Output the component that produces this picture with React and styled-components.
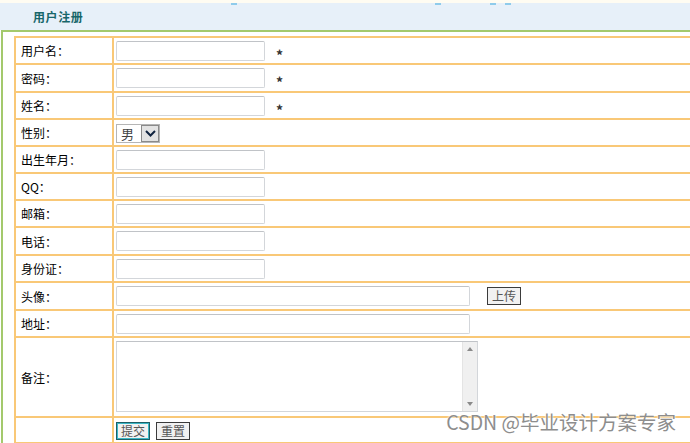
import React from "react";
import styled, { createGlobalStyle } from "styled-components";

const Global = createGlobalStyle`
  html, body { margin: 0; padding: 0; background: #fff; overflow: hidden; }
  body { font-family: "Noto Sans CJK SC", "DejaVu Sans", sans-serif; font-size: 12px; color: #222; }
`;

const Page = styled.div`
  position: relative;
  width: 690px;
  height: 443px;
  overflow: hidden;
`;

const TopStrip = styled.div`
  position: relative;
  height: 3px;
  background: #fffcf2;
`;

const Tick = styled.span`
  position: absolute;
  top: 3px;
  height: 2px;
  width: 6px;
  background: #8fcbeb;
`;

const Header = styled.div`
  height: 27px;
  background: #e7f0f9;
  display: flex;
  align-items: center;
  padding-left: 33px;
`;

const Title = styled.h2`
  margin: 0;
  font-size: 12px;
  font-weight: bold;
  color: #17666a;
  letter-spacing: 0.6px;
`;

const Panel = styled.div`
  margin-left: 1px;
  border-top: 2px solid #a3c96c;
  border-left: 2px solid #a3c96c;
  padding: 4px 0 0 11px;
  height: 420px;
`;

const Table = styled.table`
  width: 780px;
  border-collapse: collapse;
  border: 2px solid #fcdca6;
  table-layout: fixed;
`;

const Row = styled.tr`
  height: ${(p) => p.$h || 27}px;
`;

const Label = styled.td`
  width: 91px;
  padding: 0 0 0 5px;
  border: 2px solid #f9c877;
  font-size: 12px;
  font-weight: 400;
  color: #000;
  vertical-align: middle;
`;

const Cell = styled.td`
  padding: 0 0 0 2px;
  border: 2px solid #f9c877;
  vertical-align: middle;
`;

const Input = styled.input`
  box-sizing: border-box;
  width: ${(p) => p.$w || 149}px;
  height: 20px;
  margin: 0;
  border: 1px solid #d3d6da;
  border-top-color: #c0c3c7;
  border-radius: 2px;
  background: #fff;
  vertical-align: middle;
  font-size: 12px;
`;

const Star = styled.span`
  display: inline-block;
  margin-left: 11px;
  font-size: 14px;
  font-weight: bold;
  color: #333;
  vertical-align: middle;
  position: relative;
  top: 4px;
`;

const SelectBox = styled.span`
  display: inline-flex;
  align-items: stretch;
  height: 19px;
  box-sizing: border-box;
  border: 1px solid #b5b5b5;
  vertical-align: middle;
  background: #fff;
`;

const SelectText = styled.span`
  width: 20px;
  padding-left: 4px;
  font-size: 13px;
  line-height: 17px;
  color: #444;
`;

const SelectArrow = styled.span`
  width: 16px;
  background: #e3e3e3;
  border: 1px solid #8a8a8a;
  display: flex;
  align-items: center;
  justify-content: center;
`;

const AreaWrap = styled.div`
  display: flex;
  box-sizing: border-box;
  width: 362px;
  height: 71px;
  margin: 3px 0 4px;
  border: 1px solid #d3d6da;
  border-top-color: #c0c3c7;
  background: #fff;
`;

const TextArea = styled.textarea`
  flex: 1;
  margin: 0;
  border: 0;
  padding: 2px;
  resize: none;
  outline: none;
  overflow: hidden;
`;

const ScrollTrack = styled.div`
  width: 14px;
  background: #f0f0f0;
  border-left: 1px solid #e4e4e4;
  display: flex;
  flex-direction: column;
  justify-content: space-between;
  align-items: center;
  padding: 5px 0;
`;

const Arrow = styled.span`
  width: 0;
  height: 0;
  border-left: 3px solid transparent;
  border-right: 3px solid transparent;
  ${(p) => (p.$up ? "border-bottom: 4px solid #8a8a8a;" : "border-top: 4px solid #8a8a8a;")}
`;

const Button = styled.button`
  height: 18px;
  padding: 0 4px;
  margin: 0 0 0 ${(p) => p.$ml || 0}px;
  font-family: "Noto Sans CJK SC", sans-serif;
  font-size: 12px;
  line-height: 14px;
  color: #555;
  background: #f1f1f1;
  border: 1px solid ${(p) => (p.$focus ? "#1d5f66" : "#3b3b3b")};
  border-radius: 0;
  vertical-align: middle;
  box-shadow: ${(p) => (p.$focus ? "inset 0 0 0 1px #3bb7c6" : "none")};
`;

const Watermark = styled.div`
  position: absolute;
  right: 14px;
  bottom: 7px;
  font-family: "Noto Sans CJK SC", sans-serif;
  font-size: 19.5px;
  color: #8d8d8d;
  text-shadow: 0 0 2px #fff, 0 0 2px #fff;
`;

const fields = [
  { label: "用户名：", star: true, h: 27 },
  { label: "密码：", star: true, h: 28 },
  { label: "姓名：", star: true, h: 27 },
  { label: "性别：", select: true, h: 27 },
  { label: "出生年月：", h: 27 },
  { label: "QQ：", h: 27 },
  { label: "邮箱：", h: 27 },
  { label: "电话：", h: 28 },
  { label: "身份证：", h: 27 },
];

export default function App() {
  return (
    <Page>
      <Global />
      <TopStrip>
        <Tick style={{ left: 231 }} />
        <Tick style={{ left: 435 }} />
        <Tick style={{ left: 490 }} />
        <Tick style={{ left: 505 }} />
      </TopStrip>
      <Header>
        <Title>用户注册</Title>
      </Header>
      <Panel>
        <Table>
          <tbody>
            {fields.map((f) => (
              <Row key={f.label} $h={f.h}>
                <Label>{f.label}</Label>
                <Cell>
                  {f.select ? (
                    <SelectBox>
                      <SelectText>男</SelectText>
                      <SelectArrow>
                        <svg width="11" height="7" viewBox="0 0 11 7">
                          <path d="M1 1 L5.5 5.5 L10 1" fill="none" stroke="#10233f" strokeWidth="2" />
                        </svg>
                      </SelectArrow>
                    </SelectBox>
                  ) : (
                    <Input type="text" />
                  )}
                  {f.star && <Star>*</Star>}
                </Cell>
              </Row>
            ))}
            <Row $h={28}>
              <Label>头像：</Label>
              <Cell>
                <Input type="text" $w={354} />
                <Button $ml={17}>上传</Button>
              </Cell>
            </Row>
            <Row $h={27}>
              <Label>地址：</Label>
              <Cell>
                <Input type="text" $w={354} />
              </Cell>
            </Row>
            <Row $h={78}>
              <Label>备注：</Label>
              <Cell>
                <AreaWrap>
                  <TextArea />
                  <ScrollTrack>
                    <Arrow $up />
                    <Arrow />
                  </ScrollTrack>
                </AreaWrap>
              </Cell>
            </Row>
            <Row $h={26}>
              <Label />
              <Cell>
                <Button $focus>提交</Button>
                <Button $ml={6}>重置</Button>
              </Cell>
            </Row>
          </tbody>
        </Table>
      </Panel>
      <Watermark>CSDN @毕业设计方案专家</Watermark>
    </Page>
  );
}
